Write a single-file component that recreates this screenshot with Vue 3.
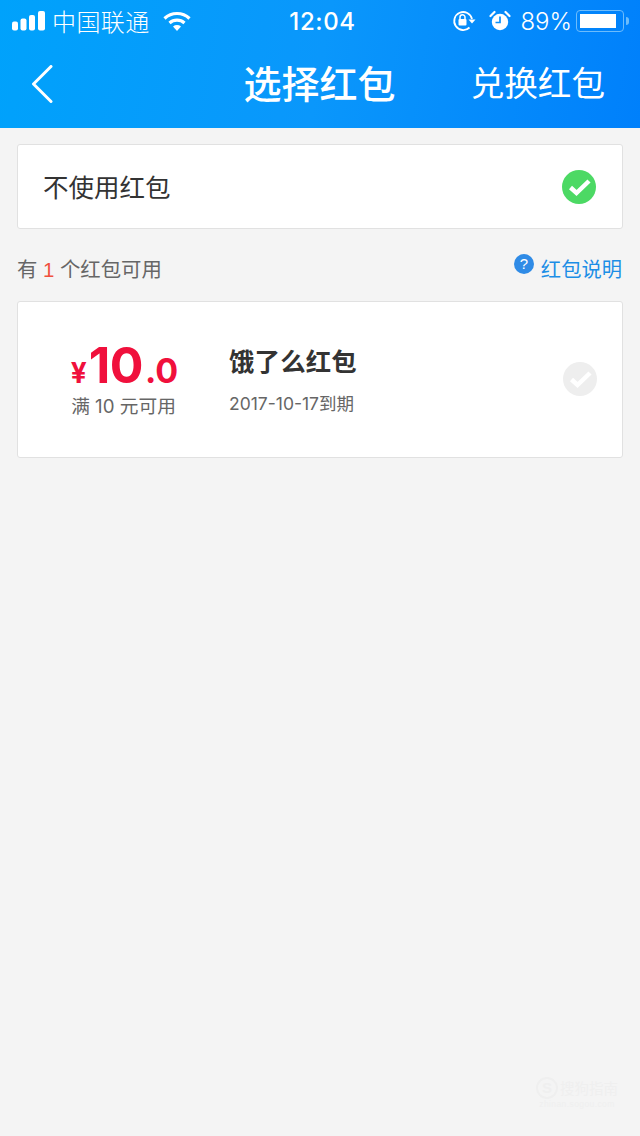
<script setup>
const statusLeft = '中国联通'
</script>

<template>
  <div class="page">
    <header class="head">
      <div class="status">
        <div class="st-left">
          <svg class="signal" width="34" height="22" viewBox="0 0 34 22">
            <rect x="0" y="11.500" width="6" height="9" rx="2" fill="#fff"/>
            <rect x="8.500" y="8.500" width="6" height="12" rx="2" fill="#fff"/>
            <rect x="17" y="5" width="6" height="15.500" rx="2" fill="#fff"/>
            <rect x="26" y="1" width="7" height="19.500" rx="2" fill="#fff"/>
          </svg>
          <span class="carrier">{{ statusLeft }}</span>
          <svg class="wifi" width="30" height="22" viewBox="0 0 30 22">
            <path d="M2.500 8.500C9.500 1.800 20.500 1.800 27.500 8.500" fill="none" stroke="#fff" stroke-width="3.200"/>
            <path d="M7.500 13C11.800 9.200 18.200 9.200 22.500 13" fill="none" stroke="#fff" stroke-width="3.200"/>
            <path d="M11 16.500C13.500 14.600 16.500 14.600 19 16.500L15 21Z" fill="#fff"/>
          </svg>
        </div>
        <div class="time">12:04</div>
        <div class="st-right">
          <svg width="24" height="22" viewBox="0 0 24 22">
            <path d="M20 9A9 9 0 1 0 17.500 17.500" fill="none" stroke="#fff" stroke-width="1.800"/>
            <path d="M16.500 9.500L23.500 9.500L20 13.500Z" fill="#fff"/>
            <rect x="6.500" y="9" width="8" height="6.500" rx="1" fill="#fff"/>
            <path d="M8 9V7.300A2.500 2.500 0 0 1 13 7.300V9" fill="none" stroke="#fff" stroke-width="1.500"/>
          </svg>
          <svg class="alarm" width="22" height="22" viewBox="0 0 22 22">
            <circle cx="11" cy="12" r="8.200" fill="#fff"/>
            <path d="M11 6.500V12.500H6.500" fill="none" stroke="#0a8ffb" stroke-width="1.700"/>
            <path d="M1.500 6L5.500 2M20.500 6L16.500 2" stroke="#fff" stroke-width="2.200" stroke-linecap="round"/>
          </svg>
          <span class="pct">89%</span>
          <div class="battery"><div class="fill"></div></div>
          <div class="nub"></div>
        </div>
      </div>
      <nav class="nav">
        <svg class="back" width="22" height="38" viewBox="0 0 22 38">
          <path d="M20 1.500L2.500 19L20 36.500" fill="none" stroke="#fff" stroke-width="3" stroke-linecap="round" stroke-linejoin="round"/>
        </svg>
        <h1 class="title">选择红包</h1>
        <span class="action">兑换红包</span>
      </nav>
    </header>

    <main class="body">
      <section class="card none">
        <span class="none-text">不使用红包</span>
        <svg class="tick" width="36" height="36" viewBox="0 0 36 36">
          <circle cx="18" cy="18" r="17" fill="#4cd964"/>
          <path d="M9.500 18.500L15.500 24L28 12" fill="none" stroke="#fff" stroke-width="4.500"/>
        </svg>
      </section>

      <div class="row">
        <span class="count">有 <em>1</em> 个红包可用</span>
        <span class="help">
          <span class="q">?</span>
          <span>红包说明</span>
        </span>
      </div>

      <section class="card packet">
        <div class="amount">
          <div class="price"><span class="yen">¥</span><span class="big">10</span><span class="dec">.0</span></div>
          <div class="cond">满 10 元可用</div>
        </div>
        <div class="info">
          <div class="name">饿了么红包</div>
          <div class="date">2017-10-17到期</div>
        </div>
        <svg class="tick tick-off" width="36" height="36" viewBox="0 0 36 36">
          <circle cx="18" cy="18" r="17" fill="#eeeeee"/>
          <path d="M9.500 18.500L15.500 24L28 12" fill="none" stroke="#fff" stroke-width="4.500"/>
        </svg>
      </section>
    </main>

    <div class="mark">
      <div class="mark-top"><span class="mark-s">S</span><span>搜狗指南</span></div>
      <div class="mark-url">zhinan.sogou.com</div>
    </div>
  </div>
</template>

<style>
html, body { margin: 0; background: #f4f4f4; }
</style>

<style scoped>
.page {
  position: relative;
  width: 640px;
  height: 1136px;
  overflow: hidden;
  background: #f4f4f4;
  font-family: "Noto Sans CJK SC", "Noto Sans", sans-serif;
}
.head {
  height: 128px;
  box-sizing: border-box;
  background: linear-gradient(100deg, #00a2fb 0%, #0a97fb 50%, #0080fb 100%);
  color: #fff;
}
.status {
  height: 42px;
  box-sizing: border-box;
  padding: 0 11px 0 12px;
  display: grid;
  grid-template-columns: 1fr auto 1fr;
  align-items: center;
}
.st-left, .st-right { display: flex; align-items: center; }
.st-right { justify-content: flex-end; }
.signal { display: block; margin-right: 6px; }
.carrier { font-size: 24px; line-height: 42px; letter-spacing: 0.4px; font-weight: 300; }
.wifi { margin-left: 12px; }
.time { padding-left: 4px; font-family: Inter, "Liberation Sans", sans-serif; font-size: 24px; font-weight: 500; letter-spacing: 0.6px; }
.alarm { margin-left: 13px; }
.pct { margin-left: 9px; font-family: Inter, "Liberation Sans", sans-serif; font-size: 24px; font-weight: 300; }
.battery {
  width: 48px;
  height: 22px;
  margin-left: 4px;
  box-sizing: border-box;
  border: 1.500px solid #6dbcfb;
  border-radius: 4px;
  padding: 2.500px;
}
.fill { width: 36px; height: 14px; background: #fff; }
.nub { width: 3px; height: 8px; margin-left: 2px; background: #6dbcfb; border-radius: 0 3px 3px 0; }
.nav {
  position: relative;
  height: 86px;
  box-sizing: border-box;
  display: flex;
  align-items: center;
  justify-content: space-between;
  padding: 0 35px 2px 31px;
}
.back { display: block; }
.title {
  position: absolute;
  left: 0;
  right: 0;
  margin: -4px 0 0;
  padding-right: 1px;
  text-align: center;
  font-size: 38px;
  line-height: 84px;
  font-weight: 500;
}
.action { margin-top: -4px; font-size: 33.600px; line-height: 84px; font-weight: 400; }
.body { display: flex; flex-direction: column; padding: 16px 17px 0; }
.card {
  box-sizing: border-box;
  background: #fff;
  border: 1px solid #e1e1e1;
  border-radius: 3px;
  display: flex;
  align-items: center;
}
.none { height: 85px; padding: 0 25px 0 25px; justify-content: space-between; }
.none-text { margin-top: -2px; font-size: 25.500px; color: #333; }
.tick { display: block; flex: none; }
.tick-off { margin-top: -2px; }
.row {
  height: 72px;
  box-sizing: border-box;
  padding-top: 6px;
  display: flex;
  justify-content: space-between;
  align-items: center;
  color: #666;
}
.count { font-size: 20.400px; }
.count em { font-style: normal; color: #f0503c; padding: 0 1px; font-family: "Liberation Sans", sans-serif; }
.help { display: flex; align-items: center; margin-right: 1px; color: #1c8ee6; font-size: 20.300px; }
.q {
  width: 20px;
  height: 20px;
  margin: -8px 7px 0 0;
  border-radius: 50%;
  background: #2f8be6;
  color: #fff;
  font-size: 15px;
  line-height: 20px;
  text-align: center;
  font-family: "Liberation Sans", sans-serif;
}
.packet { height: 157px; padding: 0 24px 0 0; }
.amount { width: 211px; flex: none; text-align: center; }
.price {
  box-sizing: border-box;
  padding-left: 2px;
  color: #f0103c;
  font-family: Inter, "Liberation Sans", sans-serif;
  font-weight: 700;
  line-height: 54px;
  height: 54px;
}
.yen { font-size: 28px; }
.big { font-size: 50px; margin-left: 2px; letter-spacing: -0.5px; }
.dec { font-size: 34px; margin-left: 2px; }
.cond { margin-top: 1px; font-family: Inter, "Noto Sans CJK SC", sans-serif; font-size: 18.700px; color: #666; line-height: 28px; }
.info { flex: 1; padding-bottom: 1px; }
.name { font-size: 25.400px; font-weight: 700; color: #333; line-height: 36px; letter-spacing: 0.2px; }
.date { font-family: Inter, "Noto Sans CJK SC", sans-serif; font-size: 17.500px; color: #666; line-height: 26px; margin-top: 13px; }
.mark {
  position: absolute;
  right: 22px;
  bottom: 26px;
  color: #efefef;
  text-align: center;
}
.mark-top { display: flex; align-items: center; gap: 2px; font-size: 14.500px; line-height: 20px; }
.mark-s {
  width: 18px;
  height: 18px;
  border-radius: 50%;
  border: 2px solid #efefef;
  font-size: 15px;
  line-height: 18px;
  font-family: "Liberation Sans", sans-serif;
  font-weight: 700;
}
.mark-url { font-size: 8.500px; line-height: 11px; font-family: "Liberation Sans", sans-serif; letter-spacing: 0.4px; }
</style>
